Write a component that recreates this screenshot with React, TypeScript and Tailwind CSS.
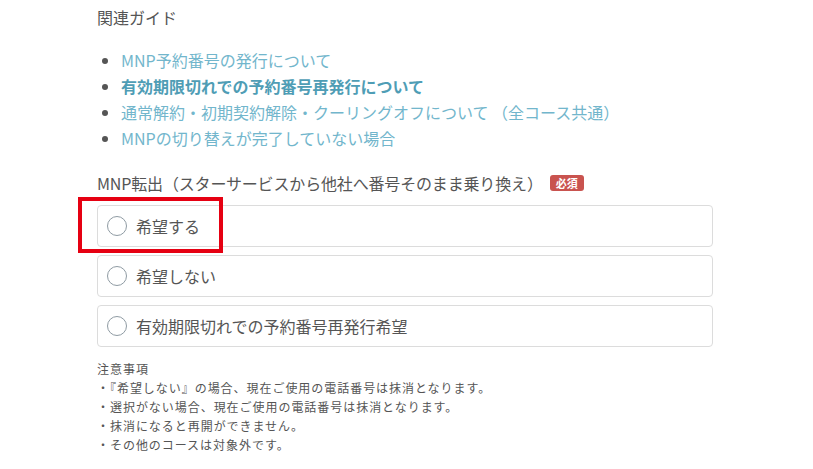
import React from "react";

const GUIDES = [
  { label: "MNP予約番号の発行について", bold: false },
  { label: "有効期限切れでの予約番号再発行について", bold: true },
  { label: "通常解約・初期契約解除・クーリングオフについて （全コース共通）", bold: false },
  { label: "MNPの切り替えが完了していない場合", bold: false },
];

const OPTIONS = ["希望する", "希望しない", "有効期限切れでの予約番号再発行希望"];

const NOTES = [
  "・『希望しない』の場合、現在ご使用の電話番号は抹消となります。",
  "・選択がない場合、現在ご使用の電話番号は抹消となります。",
  "・抹消になると再開ができません。",
  "・その他のコースは対象外です。",
];

export default function App() {
  return (
    <div
      className="min-h-[469px] w-[813px] bg-white pl-[97px] pt-[5px] text-[#555]"
      style={{ fontFamily: '"Noto Sans CJK JP", "Noto Sans", sans-serif' }}
    >
      <div className="w-[616px]">
        <h3 className="text-[16px] leading-[24px]">関連ガイド</h3>

        <ul className="mt-[18px] list-disc pl-[24px] marker:text-[#555]">
          {GUIDES.map((g) => (
            <li
              key={g.label}
              className={`text-[16px] leading-[26px] ${g.bold ? "font-bold text-[#4f9db5]" : "text-[#72b6cc]"}`}
            >
              {g.label}
            </li>
          ))}
        </ul>

        <div className="mt-[20px] flex items-center gap-[7px] text-[16px] leading-[24px]">
          <span className="tracking-[-0.01em]">MNP転出（スターサービスから他社へ番号そのまま乗り換え）</span>
          <span className="rounded-[3px] bg-[#c9534f] px-[6px] text-[11px] font-bold leading-[16px] text-white">
            必須
          </span>
        </div>

        <div className="relative mt-[10px] flex flex-col gap-[8px]">
          {OPTIONS.map((o) => (
            <label
              key={o}
              className="flex h-[42px] items-center gap-[9px] rounded-[4px] border border-[#dcdcdc] pl-[9px] text-[16px]"
            >
              <span className="h-[20px] w-[20px] rounded-full border border-[#8f9ba3]" />
              <span>{o}</span>
            </label>
          ))}
          <div className="absolute left-[-19px] top-[-8px] h-[56px] w-[145px] border-4 border-[#e60012]" />
        </div>

        <div className="mt-[12px] text-[12px] leading-[19px] tracking-[0.08em]">
          <p>注意事項</p>
          {NOTES.map((n) => (
            <p key={n}>{n}</p>
          ))}
        </div>
      </div>
    </div>
  );
}
